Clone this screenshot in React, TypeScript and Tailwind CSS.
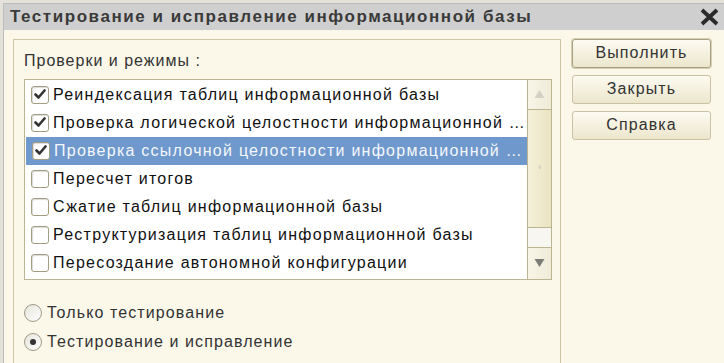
import { useState } from "react"

const checks = [
  { label: "Реиндексация таблиц информационной базы", on: true },
  { label: "Проверка логической целостности информационной …", on: true },
  { label: "Проверка ссылочной целостности информационной …", on: true },
  { label: "Пересчет итогов", on: false },
  { label: "Сжатие таблиц информационной базы", on: false },
  { label: "Реструктуризация таблиц информационной базы", on: false },
  { label: "Пересоздание автономной конфигурации", on: false },
]

function CheckBox({ on }: { on: boolean }) {
  return (
    <span className="flex h-[18px] w-[18px] shrink-0 items-center justify-center rounded-[3px] border border-[#a39d83] bg-white shadow-[inset_1px_1px_1px_rgba(0,0,0,0.15)]">
      {on && (
        <svg width="12" height="11" viewBox="0 0 12 11">
          <path
            d="M1.5 5.5 L4.5 8.5 L10.5 1.5"
            fill="none"
            stroke="#333"
            strokeWidth="2.6"
            strokeLinecap="round"
            strokeLinejoin="round"
          />
        </svg>
      )}
    </span>
  )
}

function Radio({ on }: { on: boolean }) {
  return (
    <span className="flex h-[18px] w-[18px] shrink-0 items-center justify-center rounded-full border border-[#9e9a86] bg-gradient-to-br from-[#e6e4dc] to-white">
      {on && <span className="h-[6px] w-[6px] rounded-full bg-[#333]" />}
    </span>
  )
}

function Button({ children, primary }: { children: React.ReactNode; primary?: boolean }) {
  return (
    <button
      className={`flex h-[29px] w-[139px] items-center justify-center rounded-[3px] border bg-gradient-to-b from-[#fdfbf2] to-[#ece6cc] text-[16px] tracking-[1.1px] text-[#333] ${
        primary ? "border-[#a8a083] shadow-[0_0_0_1px_#d6cfb1]" : "border-[#c9c2a4]"
      }`}
    >
      {children}
    </button>
  )
}

export default function App() {
  const [mode, setMode] = useState(1)

  return (
    <div className="h-[363px] w-[724px] overflow-hidden bg-[#e4e2d8] pl-[3px] pt-[3px] font-['Liberation_Sans',Arial,sans-serif]">
      <div className="flex h-full flex-col border-l border-t border-[#bdbdbd] bg-[#fbf8ea]">
        {/* Title bar */}
        <div className="flex h-[27px] items-center justify-between bg-[#cfcfcf] pl-[6px] pr-[4px]">
          <span className="whitespace-nowrap text-[17px] font-bold tracking-[1.55px] text-[#3a3a3a]">
            Тестирование и исправление информационной базы
          </span>
          <svg width="21" height="20" viewBox="0 0 21 20">
            <path d="M3 3 L18 17 M18 3 L3 17" stroke="#2a2a2a" strokeWidth="3.8" />
          </svg>
        </div>

        <div className="flex flex-1 gap-[11px] pl-[9px] pt-[9px]">
          {/* Group */}
          <div className="h-[340px] w-[548px] border border-[#cdc6a6] pl-[10px] pr-[8px] pt-[9px]">
            <div className="whitespace-nowrap text-[16px] tracking-[1px] text-[#333]">Проверки и режимы :</div>
            <div className="mt-[6px] flex h-[201px] border border-[#bcb592] bg-white">
              <div className="min-w-0 flex-1 pt-[1px]">
                {checks.map((c, i) => {
                  const selected = i === 2
                  return (
                    <div
                      key={c.label}
                      className={`flex h-[28px] items-center gap-[4px] pl-[6px] text-[16px] tracking-[1.25px] ${
                        selected ? "ml-[1px] bg-[#6f98cc] text-[#f4f7fc]" : "text-[#111]"
                      }`}
                    >
                      <CheckBox on={c.on} />
                      <span className="whitespace-nowrap">{c.label}</span>
                    </div>
                  )
                })}
              </div>
              {/* Scrollbar */}
              <div className="flex w-[24px] shrink-0 flex-col border-l border-[#bcb592]">
                <div className="flex h-[30px] items-center justify-center border-b border-[#bcb592] bg-gradient-to-r from-[#f8f5e8] to-[#efebd8]">
                  <svg width="11" height="10" viewBox="0 0 11 10">
                    <path d="M5.5 1 L10.5 9 L0.5 9 Z" fill="#d4d1c4" />
                  </svg>
                </div>
                <div className="flex h-[118px] items-center justify-center border-b border-[#bcb592] bg-gradient-to-r from-[#f5f0da] to-[#ebe4c2]">
                  <span className="text-[9px] text-[#d4d0bf]">◖</span>
                </div>
                <div className="h-[20px] border-b border-[#bcb592] bg-[#f7f6f0]" />
                <div className="flex flex-1 items-center justify-center bg-gradient-to-r from-[#f8f5e8] to-[#efebd8]">
                  <svg width="11" height="10" viewBox="0 0 11 10">
                    <path d="M0.5 1 L10.5 1 L5.5 9 Z" fill="#7d7b76" />
                  </svg>
                </div>
              </div>
            </div>

            <div className="mt-[24px] flex flex-col gap-[11px] text-[16px] tracking-[1.1px] text-[#333]">
              {["Только тестирование", "Тестирование и исправление"].map((t, i) => (
                <label
                  key={t}
                  className="flex h-[18px] cursor-pointer items-center gap-[5px] whitespace-nowrap"
                  onClick={() => setMode(i)}
                >
                  <Radio on={mode === i} />
                  <span>{t}</span>
                </label>
              ))}
            </div>
          </div>

          {/* Buttons */}
          <div className="flex flex-col gap-[7px]">
            <Button primary>Выполнить</Button>
            <Button>Закрыть</Button>
            <Button>Справка</Button>
          </div>
        </div>
      </div>
    </div>
  )
}
